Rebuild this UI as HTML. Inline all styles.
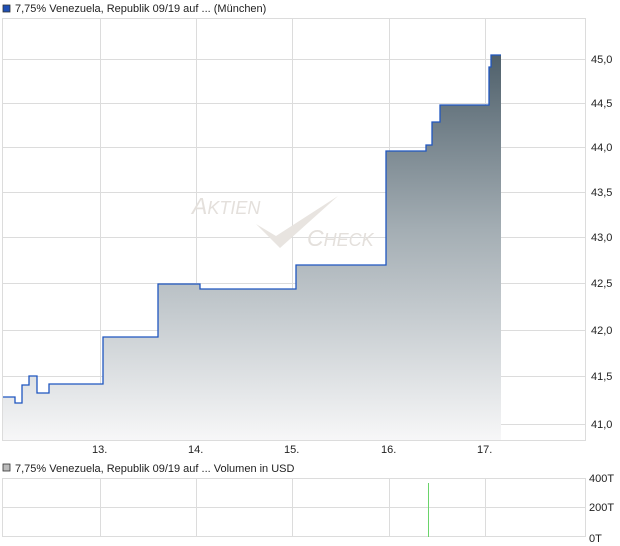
<!DOCTYPE html>
<html><head><meta charset="utf-8"><style>
html,body{margin:0;padding:0;background:#fff;width:620px;height:546px;overflow:hidden}
text{font-family:"Liberation Sans",sans-serif;font-size:11px;fill:#222}
</style></head><body>
<svg width="620" height="546" xmlns="http://www.w3.org/2000/svg">
<defs>
<linearGradient id="g" x1="0" y1="0" x2="0" y2="1">
<stop offset="0" stop-color="#4f606b"/>
<stop offset="0.45" stop-color="#a3adb3"/>
<stop offset="1" stop-color="#f7f7f8"/>
</linearGradient>
</defs>
<rect x="3" y="5" width="7" height="7" fill="#1f4fb5" stroke="#333" stroke-width="0.8"/>
<text x="15" y="12">7,75% Venezuela, Republik 09/19 auf ... (München)</text>
<g stroke="#dcdcdc" stroke-width="1">
<rect x="2.5" y="18.5" width="583" height="422" fill="none"/>
<line x1="100.5" y1="18" x2="100.5" y2="440"/><line x1="196.5" y1="18" x2="196.5" y2="440"/>
<line x1="292.5" y1="18" x2="292.5" y2="440"/><line x1="389.5" y1="18" x2="389.5" y2="440"/>
<line x1="485.5" y1="18" x2="485.5" y2="440"/>
<line x1="2" y1="59.5" x2="586" y2="59.5"/><line x1="2" y1="103.5" x2="586" y2="103.5"/>
<line x1="2" y1="147.5" x2="586" y2="147.5"/><line x1="2" y1="192.5" x2="586" y2="192.5"/>
<line x1="2" y1="237.5" x2="586" y2="237.5"/><line x1="2" y1="283.5" x2="586" y2="283.5"/>
<line x1="2" y1="330.5" x2="586" y2="330.5"/><line x1="2" y1="376.5" x2="586" y2="376.5"/>
<line x1="2" y1="424.5" x2="586" y2="424.5"/>
</g>
<text x="192" y="214" style="font-size:23px;fill:#e4e0dc;font-style:italic">A<tspan style="font-size:18px">KTIEN</tspan></text>
<text x="307" y="246" style="font-size:23px;fill:#e4e0dc;font-style:italic">C<tspan style="font-size:18px">HECK</tspan></text>
<path d="M256 224 L276 236 L338 196 L280 248 Z" fill="#e8e4e0"/>
<path d="M3 397 H15 V403 H22 V385 H29 V376 H37 V393 H49 V384 H103 V337 H158 V284 H200 V289 H296 V265 H386 V151 H426 V145 H432 V122 H440 V105 H489 V67 H491 V55 H501 V440 H3 Z" fill="url(#g)"/>
<path d="M3 397 H15 V403 H22 V385 H29 V376 H37 V393 H49 V384 H103 V337 H158 V284 H200 V289 H296 V265 H386 V151 H426 V145 H432 V122 H440 V105 H489 V67 H491 V55 H501" fill="none" stroke="#1f56c0" stroke-width="1.3"/>
<g>
<text x="591" y="63">45,0</text><text x="591" y="107">44,5</text><text x="591" y="151">44,0</text>
<text x="591" y="196">43,5</text><text x="591" y="241">43,0</text><text x="591" y="287">42,5</text>
<text x="591" y="334">42,0</text><text x="591" y="380">41,5</text><text x="591" y="428">41,0</text>
<text x="92" y="453">13.</text><text x="188" y="453">14.</text><text x="284" y="453">15.</text>
<text x="381" y="453">16.</text><text x="477" y="453">17.</text>
</g>
<rect x="3" y="464" width="7" height="7" fill="#bbb" stroke="#333" stroke-width="0.8"/>
<text x="15" y="472">7,75% Venezuela, Republik 09/19 auf ... Volumen in USD</text>
<g stroke="#dcdcdc" stroke-width="1">
<rect x="2.5" y="478.5" width="583" height="58" fill="none"/>
<line x1="2" y1="507.5" x2="586" y2="507.5"/>
<line x1="100.5" y1="478" x2="100.5" y2="537"/><line x1="196.5" y1="478" x2="196.5" y2="537"/>
<line x1="292.5" y1="478" x2="292.5" y2="537"/><line x1="389.5" y1="478" x2="389.5" y2="537"/>
<line x1="485.5" y1="478" x2="485.5" y2="537"/>
</g>
<line x1="428.5" y1="483" x2="428.5" y2="537" stroke="#6ad46a" stroke-width="1"/>
<text x="589" y="482">400T</text><text x="589" y="511">200T</text><text x="589" y="542">0T</text>
</svg>
</body></html>
